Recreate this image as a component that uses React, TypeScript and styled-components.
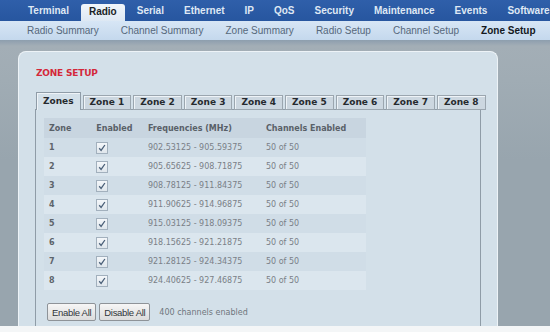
import styled, { createGlobalStyle } from "styled-components";

const GlobalStyle = createGlobalStyle`
  html, body {
    margin: 0;
    padding: 0;
    background: #f4f6f7;
  }
  body {
    width: 550px;
    height: 332px;
    overflow: hidden;
  }
`;

const Page = styled.div`
  width: 550px;
  height: 326px;
  overflow: hidden;
  display: flex;
  flex-direction: column;
  background: #98a5ae;
`;

const TopNav = styled.nav`
  height: 21px;
  flex: none;
  display: flex;
  align-items: flex-end;
  gap: 4px;
  padding-left: 20px;
  background: linear-gradient(#2f5faa, #27569f);
  white-space: nowrap;
  overflow: hidden;
`;

const TopItem = styled.span<{ $active?: boolean }>`
  flex: none;
  height: 17px;
  line-height: 16px;
  padding: 0 8px;
  border-radius: 3px 3px 0 0;
  font-family: "Liberation Sans", Arial, sans-serif;
  font-weight: bold;
  font-size: 10px;
  color: ${(p) => (p.$active ? "#1a1f26" : "#dfe8f4")};
  background: ${(p) =>
    p.$active ? "linear-gradient(#f1f6fb, #dde8f3)" : "transparent"};
  margin-bottom: ${(p) => (p.$active ? "0" : "1px")};
`;

const SubNav = styled.nav`
  height: 19px;
  flex: none;
  display: flex;
  align-items: center;
  gap: 22px;
  padding-left: 27px;
  background: linear-gradient(#d7e6f5, #c4d8ed);
  white-space: nowrap;
  overflow: hidden;
`;

const SubItem = styled.span<{ $active?: boolean }>`
  flex: none;
  font-family: "Liberation Sans", Arial, sans-serif;
  font-size: 10px;
  font-weight: ${(p) => (p.$active ? "bold" : "normal")};
  color: ${(p) => (p.$active ? "#14181d" : "#56687b")};
`;

const Main = styled.div`
  flex: 1;
  padding: 11px 0 0 18px;
  background: linear-gradient(#8d9eae 0, #a3aeb6 6px, #a0acb4 40px, #98a5ae 120px);
`;

const Panel = styled.section`
  width: 480px;
  height: 320px;
  border: 1px solid #edf3f7;
  border-bottom: none;
  border-radius: 8px 8px 0 0;
  background: #d3e0e9;
  padding: 16px 15px 0 16px;
  box-sizing: border-box;
`;

const Title = styled.h2`
  margin: 0 0 13px 1px;
  font-family: "DejaVu Sans", Verdana, sans-serif;
  font-size: 9px;
  line-height: 11px;
  font-weight: bold;
  color: #d3283a;
  letter-spacing: -0.2px;
`;

const TabRow = styled.div`
  display: flex;
  align-items: flex-end;
  gap: 2px;
  position: relative;
  z-index: 1;
  margin-bottom: -1px;
  padding-left: 1px;
`;

const Tab = styled.button<{ $active?: boolean }>`
  flex: none;
  white-space: nowrap;
  margin: 0;
  height: ${(p) => (p.$active ? "18px" : "15px")};
  padding: 0 6px;
  font-family: "DejaVu Sans", Verdana, sans-serif;
  font-size: 9px;
  line-height: 13px;
  font-weight: bold;
  color: #262a2e;
  border: 1px solid ${(p) => (p.$active ? "#8f9ca7" : "#9ba6af")};
  border-bottom: ${(p) => (p.$active ? "none" : "1px solid #9ba6af")};
  box-shadow: inset 1px 1px 0 #eef3f7;
  background: ${(p) => (p.$active ? "#d3e0e9" : "#ccd7e0")};
  cursor: pointer;
`;

const TabBody = styled.div`
  width: 446px;
  height: 240px;
  border: 1px solid #8f9ca7;
  border-bottom: none;
  padding: 8px 0 0 8px;
  box-sizing: border-box;
`;

const Table = styled.table`
  border-collapse: collapse;
  width: 322px;
  font-family: "DejaVu Sans", Verdana, sans-serif;
  font-size: 8px;
`;

const HeadCell = styled.th<{ $w: number }>`
  width: ${(p) => p.$w}px;
  height: 20px;
  padding: 0 0 0 5px;
  text-align: left;
  font-weight: bold;
  color: #596068;
  background: #c8d5e0;
`;

const Row = styled.tr<{ $alt?: boolean }>`
  height: 19px;
  background: ${(p) => (p.$alt ? "#dbe6ee" : "#d0dde7")};
`;

const Cell = styled.td<{ $bold?: boolean }>`
  padding: 0 0 0 5px;
  font-weight: ${(p) => (p.$bold ? "bold" : "normal")};
  color: ${(p) => (p.$bold ? "#5d646b" : "#7a8087")};
`;

const Check = styled.span`
  display: inline-flex;
  align-items: center;
  justify-content: center;
  width: 10px;
  height: 10px;
  margin-top: 1px;
  border: 1px solid #a2b0bd;
  background: linear-gradient(#f4f7fa, #dfe6ec);
  vertical-align: middle;
`;

const Actions = styled.div`
  display: flex;
  align-items: center;
  gap: 3px;
  margin-top: 13px;
  margin-left: 3px;
`;

const Button = styled.button`
  margin: 0;
  height: 18px;
  padding: 0 4px;
  font-family: "Liberation Sans", Arial, sans-serif;
  font-size: 9.5px;
  letter-spacing: -0.3px;
  color: #30353a;
  border: 1px solid #8e9398;
  border-radius: 2px;
  background: linear-gradient(#f6f6f6, #dcdcdc);
`;

const Status = styled.span`
  margin-left: 6px;
  font-family: "DejaVu Sans", Verdana, sans-serif;
  font-size: 8px;
  color: #6f767d;
`;

const topItems = [
  "Terminal",
  "Radio",
  "Serial",
  "Ethernet",
  "IP",
  "QoS",
  "Security",
  "Maintenance",
  "Events",
  "Software",
];

const subItems = [
  "Radio Summary",
  "Channel Summary",
  "Zone Summary",
  "Radio Setup",
  "Channel Setup",
  "Zone Setup",
];

const tabs = ["Zones", "Zone 1", "Zone 2", "Zone 3", "Zone 4", "Zone 5", "Zone 6", "Zone 7", "Zone 8"];

const zones = [
  "902.53125 - 905.59375",
  "905.65625 - 908.71875",
  "908.78125 - 911.84375",
  "911.90625 - 914.96875",
  "915.03125 - 918.09375",
  "918.15625 - 921.21875",
  "921.28125 - 924.34375",
  "924.40625 - 927.46875",
];

const CheckMark = () => (
  <Check>
    <svg width="8" height="8" viewBox="0 0 8 8">
      <path d="M1.2 4.3 L3.1 6.4 L6.9 1" fill="none" stroke="#4a5f78" strokeWidth="1.3" />
    </svg>
  </Check>
);

export default function App() {
  return (
    <>
      <GlobalStyle />
      <Page>
        <TopNav>
          {topItems.map((item) => (
            <TopItem key={item} $active={item === "Radio"}>
              {item}
            </TopItem>
          ))}
        </TopNav>
        <SubNav>
          {subItems.map((item) => (
            <SubItem key={item} $active={item === "Zone Setup"}>
              {item}
            </SubItem>
          ))}
        </SubNav>
        <Main>
          <Panel>
            <Title>ZONE SETUP</Title>
            <TabRow>
              {tabs.map((t) => (
                <Tab key={t} type="button" $active={t === "Zones"}>
                  {t}
                </Tab>
              ))}
            </TabRow>
            <TabBody>
              <Table>
                <thead>
                  <tr>
                    <HeadCell $w={45}>Zone</HeadCell>
                    <HeadCell $w={48}>Enabled</HeadCell>
                    <HeadCell $w={121}>Frequencies (MHz)</HeadCell>
                    <HeadCell $w={108}>Channels Enabled</HeadCell>
                  </tr>
                </thead>
                <tbody>
                  {zones.map((freq, i) => (
                    <Row key={freq} $alt={i % 2 === 1}>
                      <Cell $bold>{i + 1}</Cell>
                      <Cell>
                        <CheckMark />
                      </Cell>
                      <Cell>{freq}</Cell>
                      <Cell>50 of 50</Cell>
                    </Row>
                  ))}
                </tbody>
              </Table>
              <Actions>
                <Button type="button">Enable All</Button>
                <Button type="button">Disable All</Button>
                <Status>400 channels enabled</Status>
              </Actions>
            </TabBody>
          </Panel>
        </Main>
      </Page>
    </>
  );
}
